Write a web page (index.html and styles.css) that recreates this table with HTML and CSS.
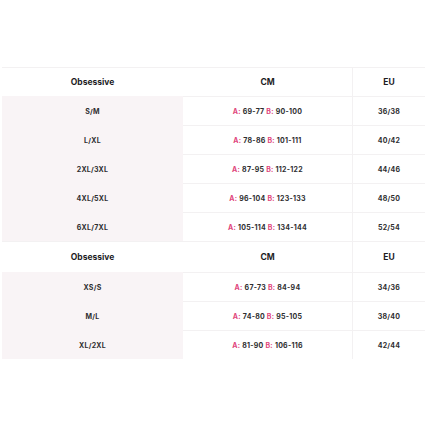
FILE: index.html
```html
<!DOCTYPE html>
<html>
<head>
<meta charset="utf-8">
<link rel="stylesheet" href="styles.css">
</head>
<body>
<table class="size-table">
  <tr class="head"><th class="c1">Obsessive</th><th class="c2">CM</th><th class="c3">EU</th></tr>
  <tr><td class="c1">S/M</td><td class="c2"><span class="k">A:</span> 69-77 <span class="k">B:</span> 90-100</td><td class="c3">36/38</td></tr>
  <tr><td class="c1">L/XL</td><td class="c2"><span class="k">A:</span> 78-86 <span class="k">B:</span> 101-111</td><td class="c3">40/42</td></tr>
  <tr><td class="c1">2XL/3XL</td><td class="c2"><span class="k">A:</span> 87-95 <span class="k">B:</span> 112-122</td><td class="c3">44/46</td></tr>
  <tr><td class="c1">4XL/5XL</td><td class="c2"><span class="k">A:</span> 96-104 <span class="k">B:</span> 123-133</td><td class="c3">48/50</td></tr>
  <tr><td class="c1">6XL/7XL</td><td class="c2"><span class="k">A:</span> 105-114 <span class="k">B:</span> 134-144</td><td class="c3">52/54</td></tr>
  <tr class="head head2"><th class="c1">Obsessive</th><th class="c2">CM</th><th class="c3">EU</th></tr>
  <tr><td class="c1">XS/S</td><td class="c2"><span class="k">A:</span> 67-73 <span class="k">B:</span> 84-94</td><td class="c3">34/36</td></tr>
  <tr><td class="c1">M/L</td><td class="c2"><span class="k">A:</span> 74-80 <span class="k">B:</span> 95-105</td><td class="c3">38/40</td></tr>
  <tr><td class="c1">XL/2XL</td><td class="c2"><span class="k">A:</span> 81-90 <span class="k">B:</span> 106-116</td><td class="c3">42/44</td></tr>
</table>
</body>
</html>
```
FILE: styles.css
```css
html, body {
  margin: 0;
  padding: 0;
  background: #fff;
}
body {
  padding: 67px 8px 0 2px;
  font-family: Inter, "Liberation Sans", sans-serif;
  color: #222;
}
.size-table {
  width: 422px;
  border-collapse: collapse;
  table-layout: fixed;
}
.size-table th, .size-table td {
  height: 28px;
  padding: 0;
  text-align: center;
  vertical-align: middle;
  font-weight: 700;
  border-top: 1px solid #f3f1f2;
}
.size-table th {
  font-size: 8.5px;
  color: #1d1d1f;
}
.size-table .head2 th {
  height: 30px;
}
.size-table td {
  font-size: 7px;
  color: #2e2e30;
  letter-spacing: 0.25px;
}
.c1 { width: 181px; }
.c2 { width: 169px; }
.c3 { width: 72px; border-left: 1px solid #f3f1f2; }
td.c1 { background: #f9f4f6; border-top-color: #f9f4f6; }
.k { color: #e0457b; }
```
